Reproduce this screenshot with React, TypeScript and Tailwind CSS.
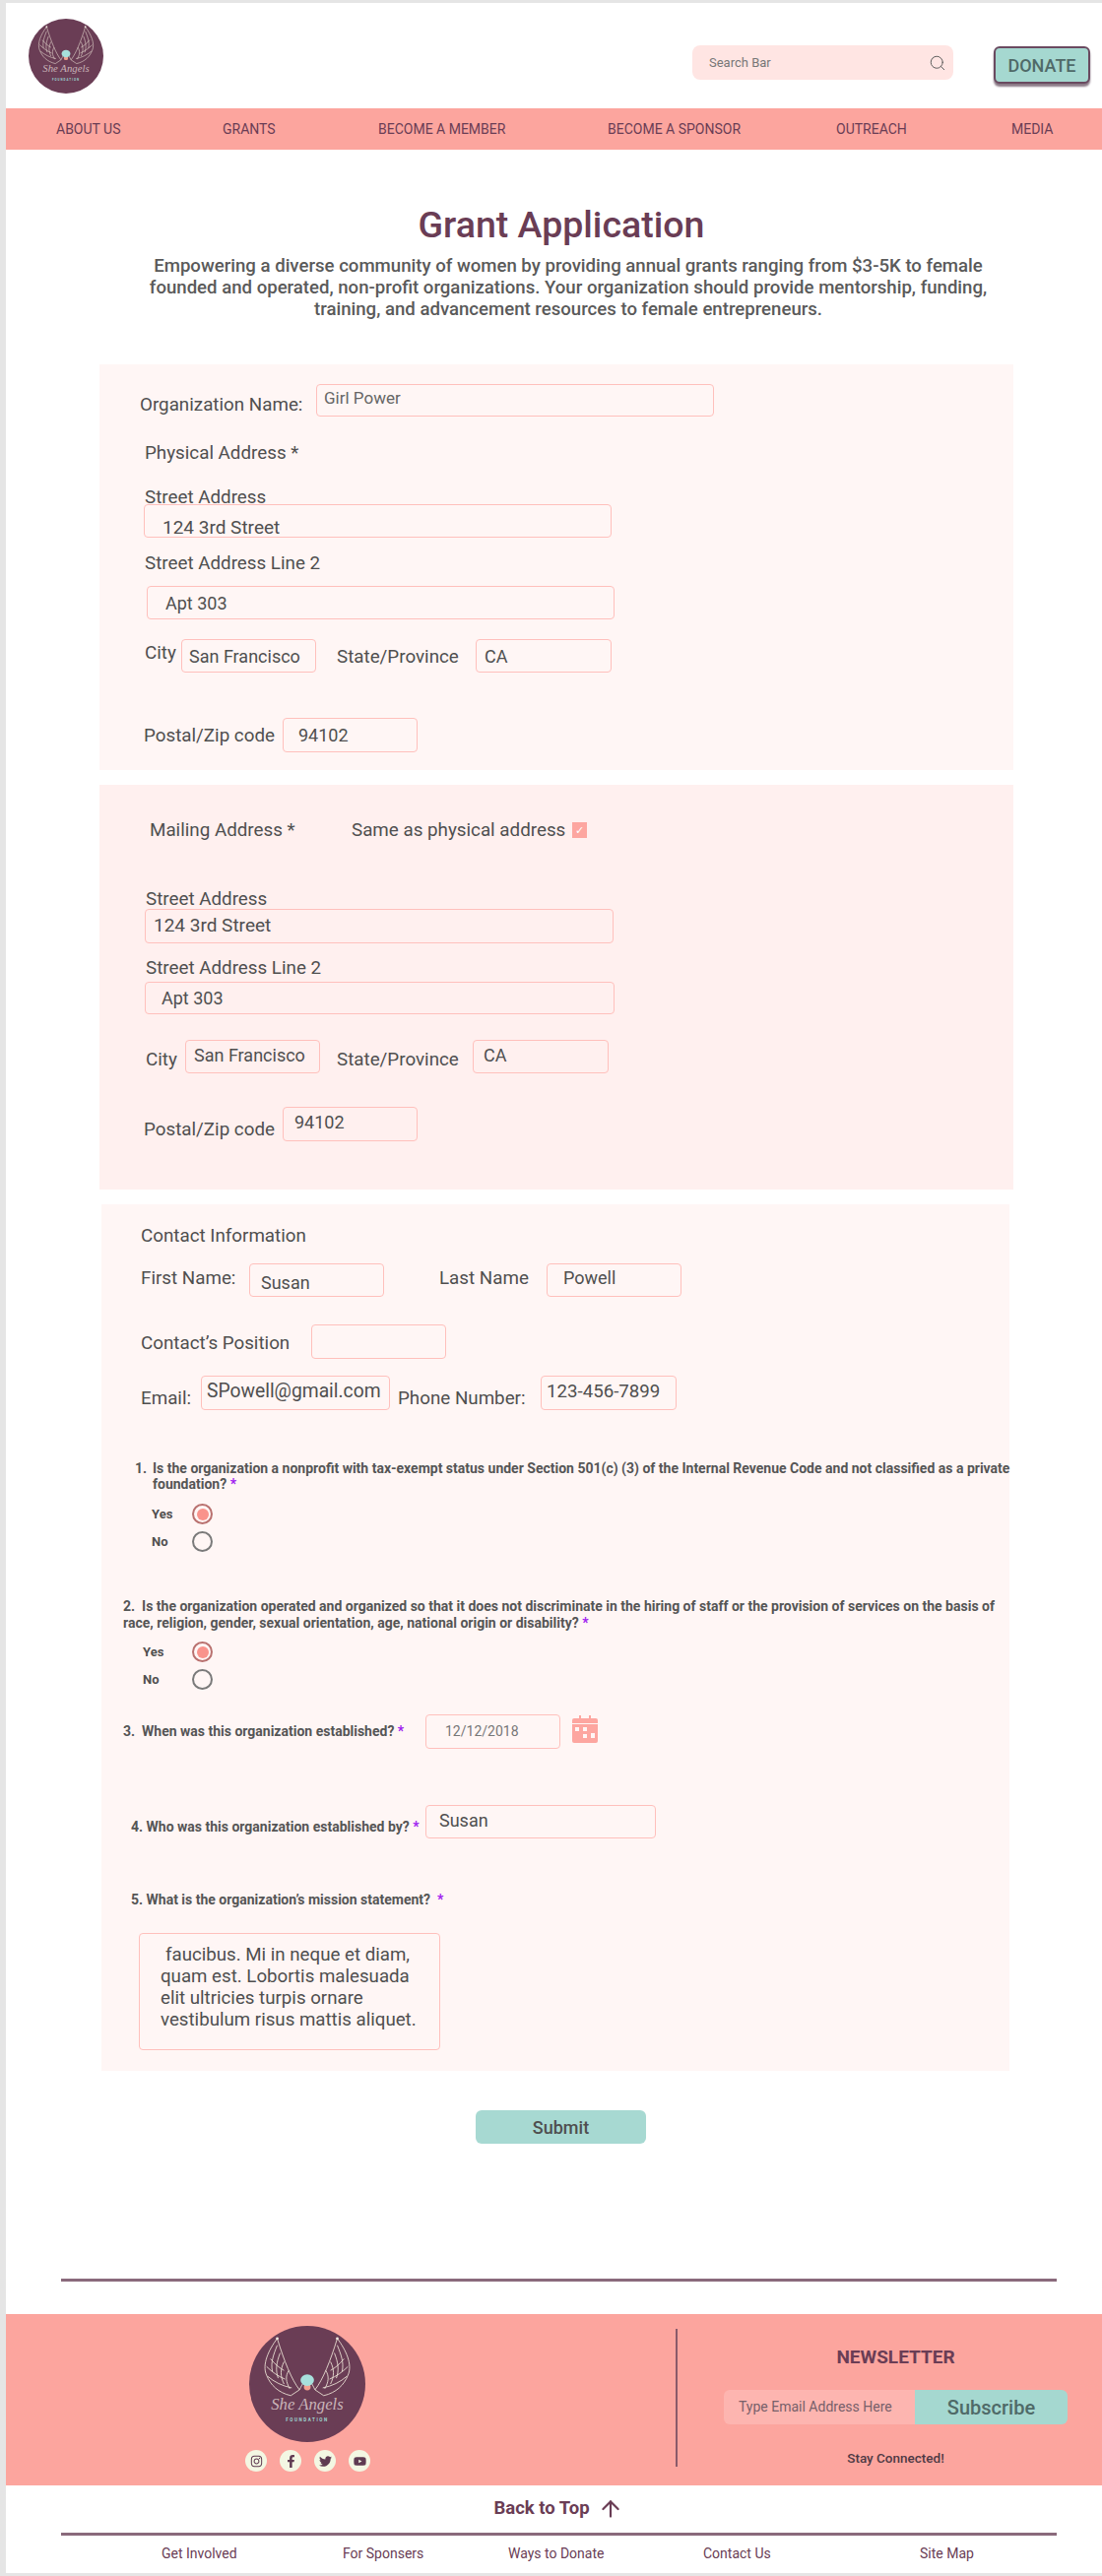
import React from 'react';
import { Search, ArrowUp } from 'lucide-react';
import { FaFacebookF, FaInstagram, FaTwitter, FaYoutube } from 'react-icons/fa';

const plum = '#6a3d55';

function Logo({ className }: { className: string }) {
  const wing = (
    <g fill="none" stroke="#e9dfd3" strokeWidth="0.9">
      <path d="M29 13 C20 25 13 40 18 51 C22 61 30 69 43 72 L52 66 C44 56 36 36 29 13 Z" />
      <path d="M29 20 C25 30 22 38 24 47" />
      <path d="M32 28 C28 38 27 46 30 54" />
      <path d="M36 37 C32 45 32 52 36 60" />
      <path d="M41 46 C37 52 38 58 42 65" />
      <path d="M18 42 C24 48 30 52 37 55" />
      <path d="M19 52 C26 58 34 62 44 64" />
      <path d="M22 34 C27 40 32 44 36 46" />
      <path d="M52 66 C54 62 55 60 57 57" />
    </g>
  );
  return (
    <svg viewBox="0 0 120 120" className={className}>
      <circle cx="60" cy="60" r="60" fill={plum} />
      {wing}
      <g transform="translate(120 0) scale(-1 1)">{wing}</g>
      <circle cx="29" cy="13" r="1.4" fill="#f3ece2" />
      <circle cx="91" cy="13" r="1.4" fill="#f3ece2" />
      <circle cx="60" cy="63" r="3.5" fill="#f2a08f" />
      <ellipse cx="60" cy="56" rx="7" ry="6" fill="#a7e0dc" />
      <text x="60" y="86" textAnchor="middle" fontSize="17" fontStyle="italic" fill="#c9b4b8" style={{ fontFamily: '"Liberation Serif", serif' }}>She Angels</text>
      <text x="60" y="99" textAnchor="middle" fontSize="4.6" fontWeight="700" letterSpacing="1.6" fill="#9fd8d4" style={{ fontFamily: 'Roboto, sans-serif' }}>FOUNDATION</text>
    </svg>
  );
}

function Box({ className, children }: { className: string; children?: React.ReactNode }) {
  return <div className={`flex items-center shrink-0 border border-[#ffc0bc] rounded-[4px] whitespace-nowrap ${className}`}>{children}</div>;
}

function Label({ className, children }: { className: string; children: React.ReactNode }) {
  return <div className={`shrink-0 text-[18.8px] leading-5 text-[#4f4f4f] whitespace-nowrap ${className}`}>{children}</div>;
}

function Star() {
  return <span className="text-[#a020f0]">*</span>;
}

function Radio({ checked }: { checked?: boolean }) {
  return (
    <span className={`flex items-center justify-center w-[21px] h-[21px] rounded-full border-2 ${checked ? 'border-[#b9716f]' : 'border-[#7a7a7a]'}`}>
      {checked && <span className="w-[12px] h-[12px] rounded-full bg-[#f9938c]"></span>}
    </span>
  );
}

function Choice({ label, checked, className }: { label: string; checked?: boolean; className: string }) {
  return (
    <div className={`flex items-center h-[21px] text-[13px] font-bold text-[#4f4f4f] ${className}`}>
      <span className="flex-1">{label}</span>
      <Radio checked={checked} />
    </div>
  );
}

export default function App() {
  return (
    <div className="w-[1119px] h-[2616px] overflow-hidden bg-[#e5e5e5] pl-[6px] pt-[3px] font-['Roboto',sans-serif]">
      <div className="bg-white h-[2610px]">
        {/* header */}
        <div className="flex items-start h-[107px]">
          <Logo className="w-[76px] h-[76px] ml-[23px] mt-[16px]" />
          <div className="flex items-center justify-between w-[265px] h-[35px] ml-[598px] mt-[43px] pl-[17px] pr-[7px] rounded-[8px] bg-[#ffe5e3] text-[13px] text-[#777777]">
            <span>Search Bar</span>
            <Search size={18} strokeWidth={1.25} className="text-[#555555]" />
          </div>
          <div className="flex items-center justify-center w-[98px] h-[38px] ml-[41px] mt-[44px] rounded-[6px] border-2 border-[#6a4a60] bg-[#a5d8d0] text-[18px] font-medium text-[#4f6a68] shadow-[0_3px_2px_#8a7885]">DONATE</div>
        </div>

        {/* nav */}
        <div className="flex items-center h-[42px] pl-[51px] bg-[#fca59e] text-[14px] text-[#6a3d55] whitespace-nowrap">
          <span className="w-[169px]">ABOUT US</span>
          <span className="w-[158px]">GRANTS</span>
          <span className="w-[233px]">BECOME A MEMBER</span>
          <span className="w-[232px]">BECOME A SPONSOR</span>
          <span className="w-[178px]">OUTREACH</span>
          <span>MEDIA</span>
        </div>

        <h1 className="mt-[54px] pl-[15px] text-center text-[37.5px] leading-[44px] font-medium text-[#6a3d55]">Grant Application</h1>
        <p className="mt-[9px] pl-[29px] text-center text-[18.6px] leading-[22px] font-medium text-[#5a5a5a]">
          Empowering a diverse community of women by providing annual grants ranging from $3-5K to female<br />
          founded and operated, non-profit organizations. Your organization should provide mentorship, funding,<br />
          training, and advancement resources to female entrepreneurs.
        </p>

        {/* physical address */}
        <div className="ml-[95px] mt-[45px] w-[928px] h-[412px] bg-[#fff6f5] pt-[20px]">
          <div className="flex ml-[41px]">
            <Label className="w-[179px] mt-[11px]">Organization Name:</Label>
            <Box className="w-[404px] h-[33px] pl-[7px] pb-[4px] text-[17px] text-[#666666]">Girl Power</Box>
          </div>
          <Label className="ml-[46px] mt-[27px]">Physical Address *</Label>
          <Label className="ml-[46px] mt-[25px]">Street Address</Label>
          <Box className="ml-[45px] -mt-[3px] w-[475px] h-[34px] pl-[18px] pt-[14px] text-[19px] text-[#4f4f4f]">124 3rd Street</Box>
          <Label className="ml-[46px] mt-[16px]">Street Address Line 2</Label>
          <Box className="ml-[48px] mt-[13px] w-[475px] h-[34px] pl-[18px] text-[18px] text-[#4f4f4f]">Apt 303</Box>
          <div className="flex ml-[46px] mt-[20px]">
            <Label className="w-[37px] mt-[4px]">City</Label>
            <Box className="w-[137px] h-[34px] pl-[7px] text-[18px] text-[#4f4f4f]">San Francisco</Box>
            <Label className="w-[141px] ml-[21px] mt-[8px]">State/Province</Label>
            <Box className="w-[138px] h-[34px] pl-[8px] text-[18px] text-[#4f4f4f]">CA</Box>
          </div>
          <div className="flex ml-[45px] mt-[46px]">
            <Label className="w-[141px] mt-[8px]">Postal/Zip code</Label>
            <Box className="w-[137px] h-[35px] pl-[15px] text-[18px] text-[#4f4f4f]">94102</Box>
          </div>
        </div>

        {/* mailing address */}
        <div className="ml-[95px] mt-[15px] w-[928px] h-[411px] bg-[#fff0ef] pt-[36px]">
          <div className="flex items-center h-[20px]">
            <Label className="ml-[51px] w-[205px]">Mailing Address *</Label>
            <Label className="w-[224px]">Same as physical address</Label>
            <span className="flex items-center justify-center w-[15px] h-[16px] bg-[#fda6a0] text-white text-[11px] leading-none">✓</span>
          </div>
          <Label className="ml-[47px] mt-[50px]">Street Address</Label>
          <Box className="ml-[46px] mt-[0px] w-[476px] h-[35px] pl-[8px] text-[19px] text-[#4f4f4f]">124 3rd Street</Box>
          <Label className="ml-[47px] mt-[15px]">Street Address Line 2</Label>
          <Box className="ml-[46px] mt-[4px] w-[477px] h-[33px] pl-[16px] text-[18px] text-[#4f4f4f]">Apt 303</Box>
          <div className="flex ml-[47px] mt-[26px]">
            <Label className="w-[40px] mt-[10px]">City</Label>
            <Box className="w-[137px] h-[34px] pl-[8px] pb-[3px] text-[18px] text-[#4f4f4f]">San Francisco</Box>
            <Label className="w-[138px] ml-[17px] mt-[10px]">State/Province</Label>
            <Box className="w-[138px] h-[34px] pl-[10px] pb-[3px] text-[18px] text-[#4f4f4f]">CA</Box>
          </div>
          <div className="flex ml-[45px] mt-[34px]">
            <Label className="w-[141px] mt-[13px]">Postal/Zip code</Label>
            <Box className="w-[137px] h-[35px] pl-[11px] pb-[5px] text-[18px] text-[#4f4f4f]">94102</Box>
          </div>
        </div>

        {/* contact and questions */}
        <div className="ml-[97px] mt-[15px] w-[922px] h-[880px] bg-[#fff6f5] pt-[22px]">
          <Label className="ml-[40px]">Contact Information</Label>
          <div className="flex ml-[40px] mt-[18px]">
            <Label className="w-[110px] mt-[5px]">First Name:</Label>
            <Box className="w-[137px] h-[34px] pl-[11px] pt-[5px] text-[18px] text-[#4f4f4f]">Susan</Box>
            <Label className="w-[109px] ml-[56px] mt-[5px]">Last Name</Label>
            <Box className="w-[137px] h-[34px] pl-[16px] pb-[5px] text-[18px] text-[#4f4f4f]">Powell</Box>
          </div>
          <div className="flex ml-[40px] mt-[28px]">
            <Label className="w-[173px] mt-[9px]">Contact’s Position</Label>
            <Box className="w-[137px] h-[35px]"></Box>
          </div>
          <div className="flex ml-[40px] mt-[17px]">
            <Label className="w-[61px] mt-[13px]">Email:</Label>
            <Box className="w-[192px] h-[35px] pl-[5px] pb-[3px] text-[19.3px] text-[#4f4f4f]">SPowell@gmail.com</Box>
            <Label className="w-[145px] ml-[8px] mt-[13px]">Phone Number:</Label>
            <Box className="w-[138px] h-[35px] pl-[5px] pb-[3px] text-[18.7px] text-[#4f4f4f]">123-456-7899</Box>
          </div>

          <div className="flex ml-[34px] mt-[51px] text-[14px] leading-4 font-bold text-[#555555]">
            <span className="w-[18px] shrink-0">1.</span>
            <span className="whitespace-nowrap">Is the organization a nonprofit with tax-exempt status under Section 501(c) (3) of the Internal Revenue Code and not classified as a private<br />foundation? <Star /></span>
          </div>
          <Choice label="Yes" checked className="ml-[51px] mt-[12px] w-[62px]" />
          <Choice label="No" className="ml-[51px] mt-[7px] w-[62px]" />

          <div className="ml-[22px] mt-[47px] text-[14px] leading-[17px] font-bold text-[#555555] whitespace-nowrap">
            2.&nbsp; Is the organization operated and organized so that it does not discriminate in the hiring of staff or the provision of services on the basis of<br />
            race, religion, gender, sexual orientation, age, national origin or disability? <Star />
          </div>
          <Choice label="Yes" checked className="ml-[42px] mt-[10px] w-[71px]" />
          <Choice label="No" className="ml-[42px] mt-[7px] w-[71px]" />

          <div className="flex ml-[22px] mt-[25px] text-[14px] font-bold text-[#555555]">
            <div className="w-[307px] mt-[9px] leading-4 whitespace-nowrap">3.&nbsp; When was this organization established? <Star /></div>
            <Box className="w-[137px] h-[35px] pl-[19px] text-[14px] font-normal text-[#777777]">12/12/2018</Box>
            <svg viewBox="0 0 26 28" className="w-[26px] h-[28px] ml-[12px] mt-[1px]">
              <path d="M7 0h2v4H7zM17 0h2v4h-2z" fill="#fda6a0" />
              <path d="M2 3h22a2 2 0 0 1 2 2v21a2 2 0 0 1-2 2H2a2 2 0 0 1-2-2V5a2 2 0 0 1 2-2z" fill="#fda6a0" />
              <path d="M0 8h26v1H0zM3 12h4v4H3zM11 12h4v4h-4zM19 18h4v5h-4zM11 19h4v4h-4z" fill="#fff6f5" />
            </svg>
          </div>

          <div className="flex ml-[30px] mt-[57px] text-[14px] font-bold text-[#555555]">
            <div className="w-[299px] mt-[14px] leading-4 whitespace-nowrap">4. Who was this organization established by? <Star /></div>
            <Box className="w-[234px] h-[34px] pl-[13px] pb-[4px] text-[18px] font-normal text-[#4f4f4f]">Susan</Box>
          </div>

          <div className="ml-[30px] mt-[54px] text-[14px] leading-4 font-bold text-[#555555] whitespace-nowrap">5. What is the organization’s mission statement? &nbsp;<Star /></div>

          <div className="ml-[38px] mt-[26px] w-[306px] h-[119px] pl-[21px] pt-[10px] border border-[#ffc0bc] rounded-[4px] text-[18.7px] leading-[22px] text-[#4f4f4f] whitespace-nowrap">
            <span className="ml-[5px]">faucibus. Mi in neque et diam,</span><br />
            quam est. Lobortis malesuada<br />
            elit ultricies turpis ornare<br />
            vestibulum risus mattis aliquet.
          </div>
        </div>

        <button className="block ml-[477px] mt-[40px] w-[173px] h-[34px] rounded-[6px] bg-[#a7d9d2] text-[18px] font-medium text-[#4f4f4f]">Submit</button>

        <div className="ml-[56px] mt-[137px] w-[1011px] h-[3px] bg-[#8a6a7c]"></div>

        {/* footer */}
        <div className="flex mt-[33px] h-[174px] bg-[#fca59e]">
          <div className="w-[680px] pt-[12px] pl-[246px]">
            <Logo className="w-[120px] h-[118px]" />
            <div className="flex gap-[13px] mt-[8px] -ml-[3px]">
              <span className="flex items-center justify-center w-[22px] h-[22px] rounded-full bg-[#f3f7e3] text-[#5f3b52]"><FaInstagram size={13} /></span>
              <span className="flex items-center justify-center w-[22px] h-[22px] rounded-full bg-[#f3f7e3] text-[#5f3b52]"><FaFacebookF size={13} /></span>
              <span className="flex items-center justify-center w-[22px] h-[22px] rounded-full bg-[#f3f7e3] text-[#5f3b52]"><FaTwitter size={13} /></span>
              <span className="flex items-center justify-center w-[22px] h-[22px] rounded-full bg-[#f3f7e3] text-[#5f3b52]"><FaYoutube size={13} /></span>
            </div>
          </div>
          <div className="w-[2px] h-[140px] mt-[15px] bg-[#8a5a6a]"></div>
          <div className="pl-[47px] pt-[33px]">
            <div className="w-[349px] text-center text-[19px] leading-[22px] font-bold text-[#6a3d55]">NEWSLETTER</div>
            <div className="flex mt-[22px] w-[349px] h-[35px]">
              <div className="flex items-center w-[194px] pl-[15px] rounded-l-[6px] bg-[#fdb5b0] text-[14px] text-[#77606a]">Type Email Address Here</div>
              <div className="flex items-center justify-center w-[155px] rounded-r-[6px] bg-[#a5d8d0] text-[20px] font-medium text-[#4f6a68]">Subscribe</div>
            </div>
            <div className="mt-[26px] w-[349px] text-center text-[13.5px] leading-4 font-medium text-[#4f3a45]">Stay Connected!</div>
          </div>
        </div>

        <div className="flex items-center justify-center h-[48px] pl-[9px] gap-[8px] text-[18.5px] font-bold text-[#6a3d55]">
          <span>Back to Top</span>
          <ArrowUp size={26} strokeWidth={2} />
        </div>
        <div className="ml-[56px] w-[1011px] h-[3px] bg-[#8a6a7c]"></div>
        <div className="flex items-center h-[36px] pl-[158px] text-[14px] text-[#6a3d55] whitespace-nowrap">
          <span className="w-[184px]">Get Involved</span>
          <span className="w-[168px]">For Sponsers</span>
          <span className="w-[198px]">Ways to Donate</span>
          <span className="w-[220px]">Contact Us</span>
          <span>Site Map</span>
        </div>
      </div>
    </div>
  );
}
